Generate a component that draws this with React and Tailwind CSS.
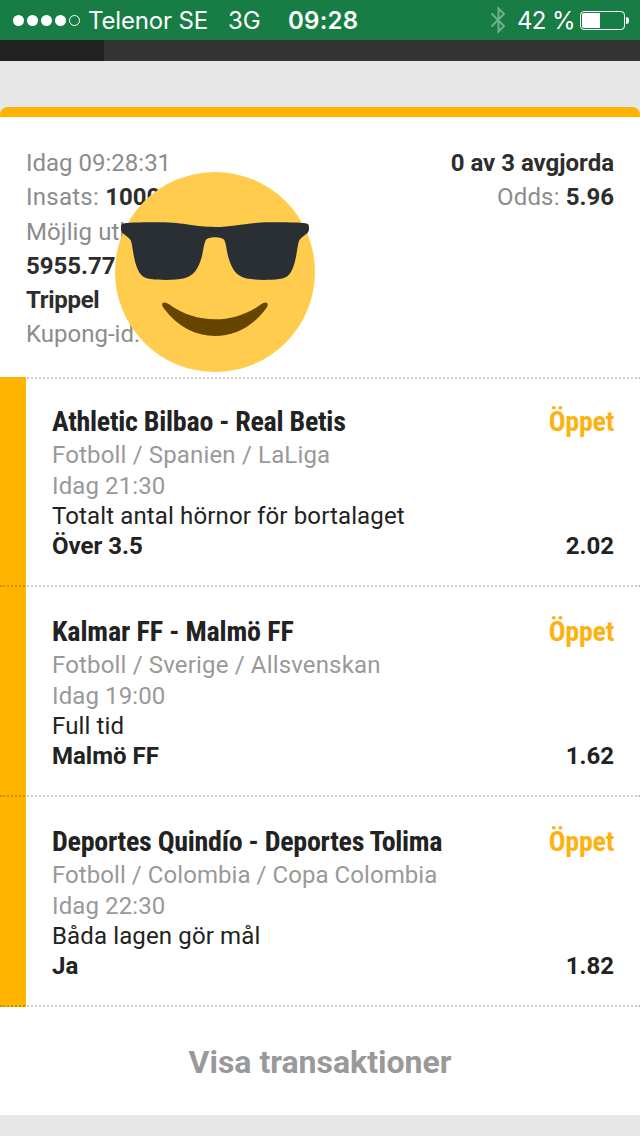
import React from 'react';

const bets = [
  {
    match: 'Athletic Bilbao - Real Betis',
    league: 'Fotboll / Spanien / LaLiga',
    time: 'Idag 21:30',
    market: 'Totalt antal hörnor för bortalaget',
    pick: 'Över 3.5',
    odds: '2.02',
  },
  {
    match: 'Kalmar FF - Malmö FF',
    league: 'Fotboll / Sverige / Allsvenskan',
    time: 'Idag 19:00',
    market: 'Full tid',
    pick: 'Malmö FF',
    odds: '1.62',
    titleClass: 'tracking-[-0.14px]',
  },
  {
    match: 'Deportes Quindío - Deportes Tolima',
    league: 'Fotboll / Colombia / Copa Colombia',
    time: 'Idag 22:30',
    market: 'Båda lagen gör mål',
    pick: 'Ja',
    odds: '1.82',
    leagueClass: 'tracking-[0.06px]',
  },
];

function StatusBar() {
  return (
    <div className="flex h-10 items-center bg-[#177d45] pl-[13px] pr-[11px] font-['Inter',sans-serif] text-[24px] leading-10 whitespace-nowrap text-white">
      <div className="flex gap-[3px]">
        <span className="size-[11px] rounded-full bg-white" />
        <span className="size-[11px] rounded-full bg-white" />
        <span className="size-[11px] rounded-full bg-white" />
        <span className="size-[11px] rounded-full bg-white" />
        <span className="size-[11px] rounded-full border border-white" />
      </div>
      <span className="ml-[8px] w-[140px] pt-[2px] tracking-[-0.15px]">Telenor SE</span>
      <span className="w-[60px] pt-[2px]">3G</span>
      <span className="pt-[2px] font-semibold tracking-[0.25px]">09:28</span>
      <svg className="ml-auto mr-[11px] h-[28px] w-[16px]" viewBox="0 0 16 28" fill="none" stroke="#6fb08c" strokeWidth="2">
        <path d="M1.500 7.500 14 20 8.500 25.500V2.500L14 8 1.500 20.500" />
      </svg>
      <span className="mr-[5px] pt-[2px] tracking-[-0.6px]">42 %</span>
      <div className="flex items-center gap-px">
        <div className="h-[19px] w-[45px] rounded-[4px] border border-white p-px">
          <div className="h-full w-[18px] rounded-l-[2px] bg-white" />
        </div>
        <div className="h-[7px] w-[3px] rounded-r-full bg-white" />
      </div>
    </div>
  );
}

function Emoji() {
  return (
    <svg className="absolute left-[115px] top-[55px] size-[200px]" viewBox="0 0 600 600">
      <circle cx="300" cy="300" r="300" fill="#ffcc4d" />
      <path
        fill="#292f33"
        d="M19 160C21 153 32 151 135 151 210 152 240 165 300 165 360 165 390 152 465 151 568 151 579 153 581 160 583 167 582 176 579 181 574 188 558 196 553 205 547 216 546 262 531 294 522 314 510 319 492 321 462 325 420 325 392 319 361 312 349 285 341 259 335 239 334 217 328 205 323 193 277 193 272 205 266 217 265 239 259 259 251 285 239 312 208 319 180 325 138 325 108 321 90 319 78 314 69 294 54 262 53 216 47 205 42 196 26 188 21 181 18 176 17 167 19 160Z"
      />
      <path fill="#664500" d="M143 393c6-4 12-1 19 4 82 60 194 60 276 0 7-5 13-8 18-4 5 5 1 12-4 18-80 108-224 108-304 0-5-6-9-13-5-18Z" />
    </svg>
  );
}

function Summary() {
  return (
    <div className="flex justify-between border-b-2 border-dotted border-[#d2d2d2] px-[26px] pt-[29.15px] pb-[25.65px] text-[24px] leading-[34.2px] text-[#8c8c8c]">
      <div className="whitespace-nowrap">
        <p>Idag 09:28:31</p>
        <p><span className="tracking-[0.25px]">Insats: </span><b className="text-[#2d2d2d]">1000</b></p>
        <p className="tracking-[0.1px]">Möjlig utb</p>
        <p className="font-bold text-[#2d2d2d]">5955.77</p>
        <p className="font-bold tracking-[-0.3px] text-[#2d2d2d]">Trippel</p>
        <p>Kupong-id:</p>
      </div>
      <div className="text-right">
        <p className="font-bold text-[#2d2d2d]">0 av 3 avgjorda</p>
        <p><span className="tracking-[0.15px]">Odds: </span><b className="text-[#2d2d2d]">5.96</b></p>
      </div>
    </div>
  );
}

function BetRow({ bet }) {
  return (
    <div className="h-[210px] border-b-2 border-dotted border-black/20 bg-linear-to-r from-[#ffb400] from-[26px] to-transparent to-[26px] pt-[26px] pr-[26px] pl-[52px] text-[24px] leading-[30px] whitespace-nowrap text-[#222]">
      <div className="flex justify-between font-['Roboto_Condensed','Roboto',sans-serif] text-[28px] leading-[37px] font-bold font-stretch-75%">
        <h2 className={bet.titleClass || 'tracking-[-0.27px]'}>{bet.match}</h2>
        <span className="tracking-[-0.27px] text-[#fcb312]">Öppet</span>
      </div>
      <p className={`leading-[31px] text-[#999] ${bet.leagueClass || 'tracking-[0.16px]'}`}>{bet.league}</p>
      <p className="leading-[30px] tracking-[0.1px] text-[#999]">{bet.time}</p>
      <p className="tracking-[0.13px]">{bet.market}</p>
      <div className="flex justify-between font-bold">
        <span>{bet.pick}</span>
        <span>{bet.odds}</span>
      </div>
    </div>
  );
}

export default function App() {
  return (
    <div className="h-[1136px] w-[640px] overflow-hidden bg-[#e7e7e7] font-['Roboto',sans-serif]">
      <StatusBar />
      <div className="h-[21px] bg-[#333]">
        <div className="h-full w-[104px] bg-[#222]" />
      </div>
      <div className="relative mt-[46px] overflow-hidden rounded-t-[8px] border-t-[10px] border-[#ffb400] bg-white">
        <Summary />
        <Emoji />
        {/* first row's stripe runs up over the summary divider */}
        <div className="-mt-[2px]">
          {bets.map((bet) => (
            <BetRow key={bet.match} bet={bet} />
          ))}
        </div>
        <button className="block h-[108px] w-full pt-[2px] text-center text-[32px] font-bold text-[#999]">Visa transaktioner</button>
      </div>
    </div>
  );
}
